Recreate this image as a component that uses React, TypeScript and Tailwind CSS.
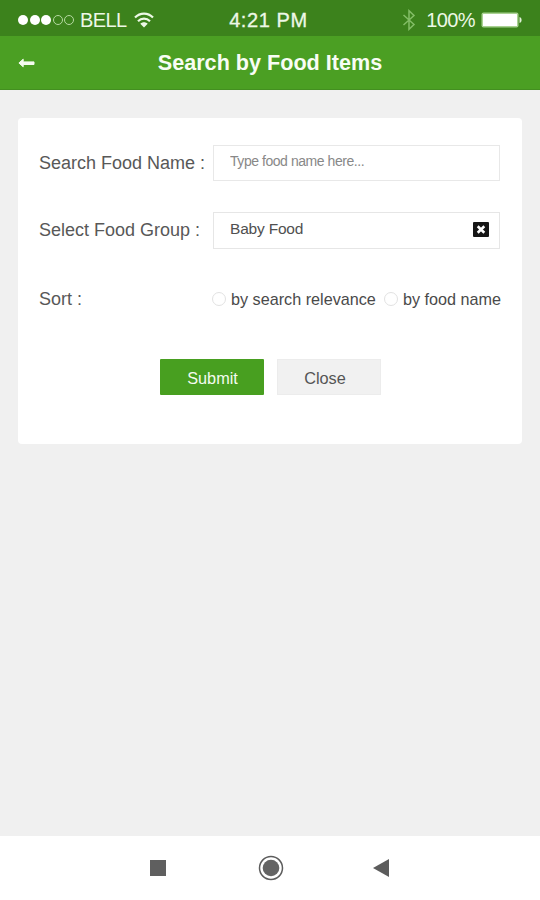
import React, { useState } from 'react';

// --- Types ---
type SortKey = 'relevance' | 'name';

// --- Icons ---
const WifiIcon = () => (
    <svg width="20" height="16" viewBox="0 0 20 16" fill="none" stroke="#edf8e6" strokeWidth="2.2">
        <path d="M1 5.6C6 0.4 14 0.4 19 5.6" />
        <path d="M4 9.2C7.4 5.8 12.6 5.8 16 9.2" />
        <path d="M6.3 11.7C8.4 9.7 11.6 9.7 13.7 11.7L10 15.4Z" fill="#edf8e6" stroke="none" />
    </svg>
);

const BluetoothIcon = () => (
    <svg width="14" height="22" viewBox="0 0 14 22" fill="none" stroke="#83bd66" strokeWidth="1.5">
        <path d="M1.5 6L12 15.5L7 20.3V1.7L12 6.5L1.5 16" />
    </svg>
);

const BatteryIcon = () => (
    <svg width="42" height="16" viewBox="0 0 42 16">
        <rect x="0.5" y="0.5" width="37" height="15" rx="2" fill="#a9d292" />
        <rect x="2" y="2" width="34" height="12" rx="0.5" fill="#fff" />
        <path d="M38.5 5C41.3 5.5 41.3 10.5 38.5 11Z" fill="#dff0d6" />
    </svg>
);

const BackIcon = () => (
    <svg width="17" height="10" viewBox="0 0 17 10" fill="#f4fbef" stroke="#f4fbef" strokeWidth="1" strokeLinejoin="round">
        <path d="M0.9 5L5.2 1.2V3.9H16V6.5H5.2V8.8Z" />
    </svg>
);

const ClearIcon = () => (
    <svg width="16" height="15" viewBox="0 0 16 15">
        <rect width="16" height="15" rx="1" fill="#161616" />
        <path d="M4.7 4.3L11.3 10.7M11.3 4.3L4.7 10.7" stroke="#fff" strokeWidth="2.6" />
    </svg>
);

// --- Radio option ---
function SortOption({ label, checked, onSelect }: { label: string; checked: boolean; onSelect: () => void }) {
    return (
        <button type="button" onClick={onSelect} className="flex items-center whitespace-nowrap">
            <span className="flex size-3.5 items-center justify-center rounded-full border border-[#e2e2e2]">
                {checked && <span className="size-2 rounded-full bg-[#4b9f23]" />}
            </span>
            <span className="ml-[5px] text-[16.2px] leading-5 text-[#4a4a4a]">{label}</span>
        </button>
    );
}

export default function App() {
    const [foodName, setFoodName] = useState('');
    const [group, setGroup] = useState('Baby Food');
    const [sort, setSort] = useState<SortKey | null>(null);

    return (
        <div className="flex h-[900px] w-[540px] flex-col bg-[#f0f0f0] font-['Liberation_Sans',Arial,sans-serif]">
            {/* Status Bar */}
            <div className="grid h-9 shrink-0 grid-cols-3 items-center bg-[#3c821c] pt-1 pr-[17px] pl-[18px] text-xl text-[#edf8e6]">
                <div className="flex items-center">
                    <div className="flex gap-[1.5px]">
                        {[1, 1, 1, 0, 0].map((on, i) => (
                            <span key={i} className={on ? 'size-2.5 rounded-full bg-white' : 'size-2.5 rounded-full border border-[#b5d9a1]'} />
                        ))}
                    </div>
                    <span className="ml-[6px] tracking-[-0.6px]">BELL</span>
                    <span className="ml-[7px]"><WifiIcon /></span>
                </div>
                <span className="pr-[4px] text-center tracking-[0.6px] [-webkit-text-stroke:0.3px_#edf8e6]">4:21 PM</span>
                <div className="flex items-center justify-end">
                    <BluetoothIcon />
                    <span className="mr-[6px] ml-[10px] tracking-[-0.6px]">100%</span>
                    <BatteryIcon />
                </div>
            </div>

            {/* Header */}
            <div className="grid h-[54px] shrink-0 grid-cols-[1fr_auto_1fr] items-center border-b border-[#438f20] bg-[#4b9f23] px-[18px]">
                <BackIcon />
                <h1 className="pt-[2px] text-[21.6px] font-bold text-[#f8fdf4]">Search by Food Items</h1>
            </div>

            {/* Search Form */}
            <div className="mx-[18px] mt-7 h-[326px] rounded-[4px] bg-white pt-[27px] pr-[21px] pl-[21px]">
                <div className="grid grid-cols-[174px_287px] items-center gap-y-8">
                    <label className="text-lg leading-9 text-[#585858]">Search Food Name :</label>
                    <input
                        type="text"
                        value={foodName}
                        onChange={(e) => setFoodName(e.target.value)}
                        placeholder="Type food name here..."
                        className="h-9 border border-[#e8e8e8] px-4 pb-[5px] text-[14px] tracking-[-0.45px] text-[#4a4a4a] outline-none placeholder:text-[#888888]"
                    />
                    <label className="-mt-[2px] text-lg leading-9 text-[#585858]">Select Food Group :</label>
                    <div className="-mt-px flex h-[37px] items-center justify-between border border-[#e6e6e6] pr-[10px] pb-[3px] pl-4">
                        <span className="text-[15.5px] tracking-[-0.2px] text-[#505050]">{group}</span>
                        <button type="button" onClick={() => setGroup('')} className="pt-px"><ClearIcon /></button>
                    </div>
                    <span className="text-lg leading-9 text-[#585858]">Sort :</span>
                    <div className="-ml-px flex gap-2">
                        <SortOption label="by search relevance" checked={sort === 'relevance'} onSelect={() => setSort('relevance')} />
                        <SortOption label="by food name" checked={sort === 'name'} onSelect={() => setSort('name')} />
                    </div>
                </div>

                {/* Actions */}
                <div className="mt-[42px] ml-[121px] flex gap-[13px] text-[16.3px]">
                    <button type="submit" className="h-9 w-[104px] rounded-[1px] bg-[#489f20] pt-[2px] pl-px text-[#f4fbef]">Submit</button>
                    <button type="button" className="h-9 w-[104px] border border-[#ececec] bg-[#f1f1f1] pt-[2px] pr-2 text-[#555555]">Close</button>
                </div>
            </div>

            {/* Navigation Bar */}
            <div className="mt-auto flex h-16 items-center justify-center bg-white pr-px">
                <svg width="16" height="16" viewBox="0 0 16 16">
                    <rect width="16" height="16" fill="#5f5f5f" />
                </svg>
                <svg className="ml-[92px]" width="26" height="26" viewBox="0 0 26 26">
                    <circle cx="13" cy="13" r="11.5" fill="none" stroke="#5c5c5c" strokeWidth="1.5" />
                    <circle cx="13" cy="13" r="8.3" fill="#646464" />
                </svg>
                <svg className="ml-[89px]" width="16" height="18" viewBox="0 0 16 18">
                    <path d="M0 9L16 0V18Z" fill="#5c5c5c" />
                </svg>
            </div>
        </div>
    );
}
